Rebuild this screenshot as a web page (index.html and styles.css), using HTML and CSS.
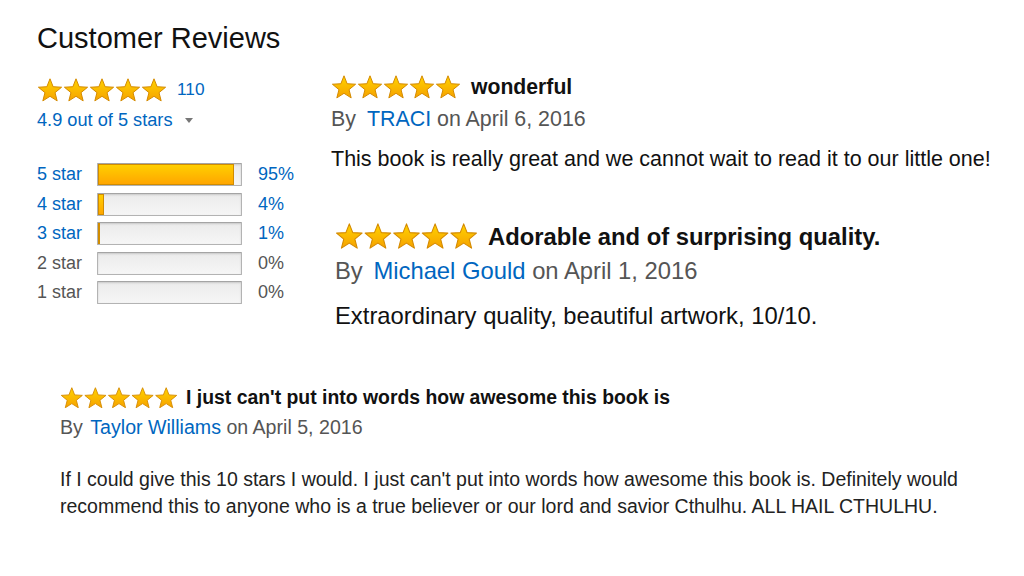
FILE: index.html
```html
<!DOCTYPE html>
<html lang="en">
<head>
<meta charset="utf-8">
<title>Customer Reviews</title>
<link rel="stylesheet" href="styles.css">
</head>
<body>
<svg class="defs" width="0" height="0" aria-hidden="true">
  <defs>
    <linearGradient id="starGrad" x1="0" y1="0" x2="0" y2="1">
      <stop offset="0" stop-color="#ffd300"/>
      <stop offset="1" stop-color="#f6a200"/>
    </linearGradient>
    <path id="star" d="M13 0.8 L16.12 8.71 L24.6 9.23 L18.04 14.64 L20.17 22.87 L13 18.3 L5.83 22.87 L7.96 14.64 L1.4 9.23 L9.88 8.71 Z" fill="url(#starGrad)" stroke="#d48a00" stroke-width="1" stroke-linejoin="round"/>
  </defs>
</svg>

<div class="page">
  <h1 class="title">Customer Reviews</h1>

  <div class="top">
    <div class="summary">
      <div class="rating">
        <svg class="stars stars--m" viewBox="0 0 130 24"><use href="#star"/><use href="#star" x="26"/><use href="#star" x="52"/><use href="#star" x="78"/><use href="#star" x="104"/></svg>
        <span class="count link">110</span>
      </div>
      <div class="avg link">4.9 out of 5 stars<span class="caret"></span></div>

      <div class="histogram">
        <div class="hrow">
          <span class="hlabel link">5 star</span>
          <span class="bar"><span class="fill" style="width:95%"></span></span>
          <span class="hpct link">95%</span>
        </div>
        <div class="hrow">
          <span class="hlabel link">4 star</span>
          <span class="bar"><span class="fill" style="width:4%"></span></span>
          <span class="hpct link">4%</span>
        </div>
        <div class="hrow">
          <span class="hlabel link">3 star</span>
          <span class="bar"><span class="fill fill--thin" style="width:1%"></span></span>
          <span class="hpct link">1%</span>
        </div>
        <div class="hrow">
          <span class="hlabel muted">2 star</span>
          <span class="bar"></span>
          <span class="hpct muted">0%</span>
        </div>
        <div class="hrow">
          <span class="hlabel muted">1 star</span>
          <span class="bar"></span>
          <span class="hpct muted">0%</span>
        </div>
      </div>
    </div>

    <div class="reviews">
      <div class="review review--m">
        <div class="review-head">
          <svg class="stars stars--m" viewBox="0 0 130 24"><use href="#star"/><use href="#star" x="26"/><use href="#star" x="52"/><use href="#star" x="78"/><use href="#star" x="104"/></svg>
          <span class="review-title">wonderful</span>
        </div>
        <div class="byline">By <span class="author">TRACI</span> on April 6, 2016</div>
        <p class="review-body">This book is really great and we cannot wait to read it to our little one!</p>
      </div>

      <div class="review review--l">
        <div class="review-head">
          <svg class="stars stars--l" viewBox="0 0 130 24"><use href="#star"/><use href="#star" x="26"/><use href="#star" x="52"/><use href="#star" x="78"/><use href="#star" x="104"/></svg>
          <span class="review-title">Adorable and of surprising quality.</span>
        </div>
        <div class="byline">By <span class="author">Michael Gould</span> on April 1, 2016</div>
        <p class="review-body">Extraordinary quality, beautiful artwork, 10/10.</p>
      </div>
    </div>
  </div>

  <div class="review review--s">
    <div class="review-head">
      <svg class="stars stars--s" viewBox="0 0 130 24"><use href="#star"/><use href="#star" x="26"/><use href="#star" x="52"/><use href="#star" x="78"/><use href="#star" x="104"/></svg>
      <span class="review-title">I just can't put into words how awesome this book is</span>
    </div>
    <div class="byline">By <span class="author">Taylor Williams</span> on April 5, 2016</div>
    <p class="review-body">If I could give this 10 stars I would. I just can't put into words how awesome this book is. Definitely would recommend this to anyone who is a true believer or our lord and savior Cthulhu. ALL HAIL CTHULHU.</p>
  </div>
</div>
</body>
</html>
```

FILE: styles.css
```css
html, body {
  margin: 0;
  background: #fff;
}

body {
  font-family: "Liberation Sans", Arial, sans-serif;
  color: #111;
}

.defs {
  display: block;
  width: 0;
  height: 0;
  overflow: hidden;
}

.page {
  padding: 21px 0 0 37px;
}

.title {
  margin: 0;
  font-size: 29px;
  font-weight: 400;
  line-height: 34px;
  color: #111;
}

.link { color: #0066c0; }
.muted { color: #555; }

.top {
  display: flex;
  margin-top: 20px;
}

.summary {
  width: 294px;
  flex: none;
  padding-top: 3px;
}

.stars {
  display: block;
  flex: none;
}
.stars--m { width: 130px; height: 24px; }
.stars--l { width: 143px; height: 26.4px; }
.stars--s { width: 118px; height: 21.8px; }

.rating {
  display: flex;
  align-items: center;
  gap: 10px;
  height: 23px;
}

.count {
  font-size: 17.3px;
}

.avg {
  display: flex;
  align-items: center;
  margin-top: 8px;
  font-size: 18.2px;
  line-height: 22px;
}

.caret {
  width: 0;
  height: 0;
  margin-left: 13px;
  border-left: 4.5px solid transparent;
  border-right: 4.5px solid transparent;
  border-top: 5px solid #777;
}

.histogram {
  margin-top: 29px;
}

.hrow {
  display: flex;
  align-items: center;
  height: 29.5px;
  font-size: 18px;
}

.hlabel {
  width: 60px;
  flex: none;
}

.bar {
  display: flex;
  width: 145px;
  height: 23px;
  flex: none;
  box-sizing: border-box;
  border: 1px solid #b3b3b3;
  border-top-color: #a4a4a4;
  border-radius: 1px;
  background: linear-gradient(#ebebeb, #f6f6f6);
  box-shadow: inset 0 1px 2px rgba(0, 0, 0, 0.15);
}

.fill {
  display: block;
  height: 100%;
  box-sizing: border-box;
  min-width: 2px;
  background: linear-gradient(#ffcf00, #ffa600);
  border: 1px solid #d08c00;
}

.fill--thin {
  border-width: 0 0 0 2px;
}

.hpct {
  margin-left: 16px;
}

.reviews {
  display: flex;
  flex-direction: column;
}

.review-head {
  display: flex;
  align-items: center;
  gap: 10px;
}

.review-title {
  font-weight: 700;
  color: #111;
}

.byline {
  color: #555;
}

.byline .author {
  color: #0066c0;
}

.review-body {
  margin: 0;
}

/* review at medium scale */
.review--m {
  font-size: 21.2px;
}
.review--m .review-head { height: 23px; }
.review--m .byline { margin-top: 8px; line-height: 26px; font-size: 21.4px; }
.review--m .author { margin-left: 5px; }
.review--m .review-body { margin-top: 14px; line-height: 26px; font-size: 21.5px; color: #111; }

/* review at large scale */
.review--l {
  margin-top: 52px;
  margin-left: 4px;
  font-size: 23.8px;
}
.review--l .review-head { height: 25px; }
.review--l .byline { margin-top: 8px; line-height: 28px; }
.review--l .author { margin-left: 4px; }
.review--l .review-body { margin-top: 17px; line-height: 28px; color: #111; }

/* review at small scale */
.review--s {
  margin-top: 57px;
  margin-left: 23px;
  font-size: 19.5px;
}
.review--s .review-head { height: 21px; gap: 8px; }
.review--s .review-title { font-size: 19.4px; }
.review--s .byline { margin-top: 7px; line-height: 24px; font-size: 19.6px; }
.review--s .author { margin-left: 2px; }
.review--s .review-body {
  width: 940px;
  margin-top: 27px;
  line-height: 27px;
  color: #222;
}
```
